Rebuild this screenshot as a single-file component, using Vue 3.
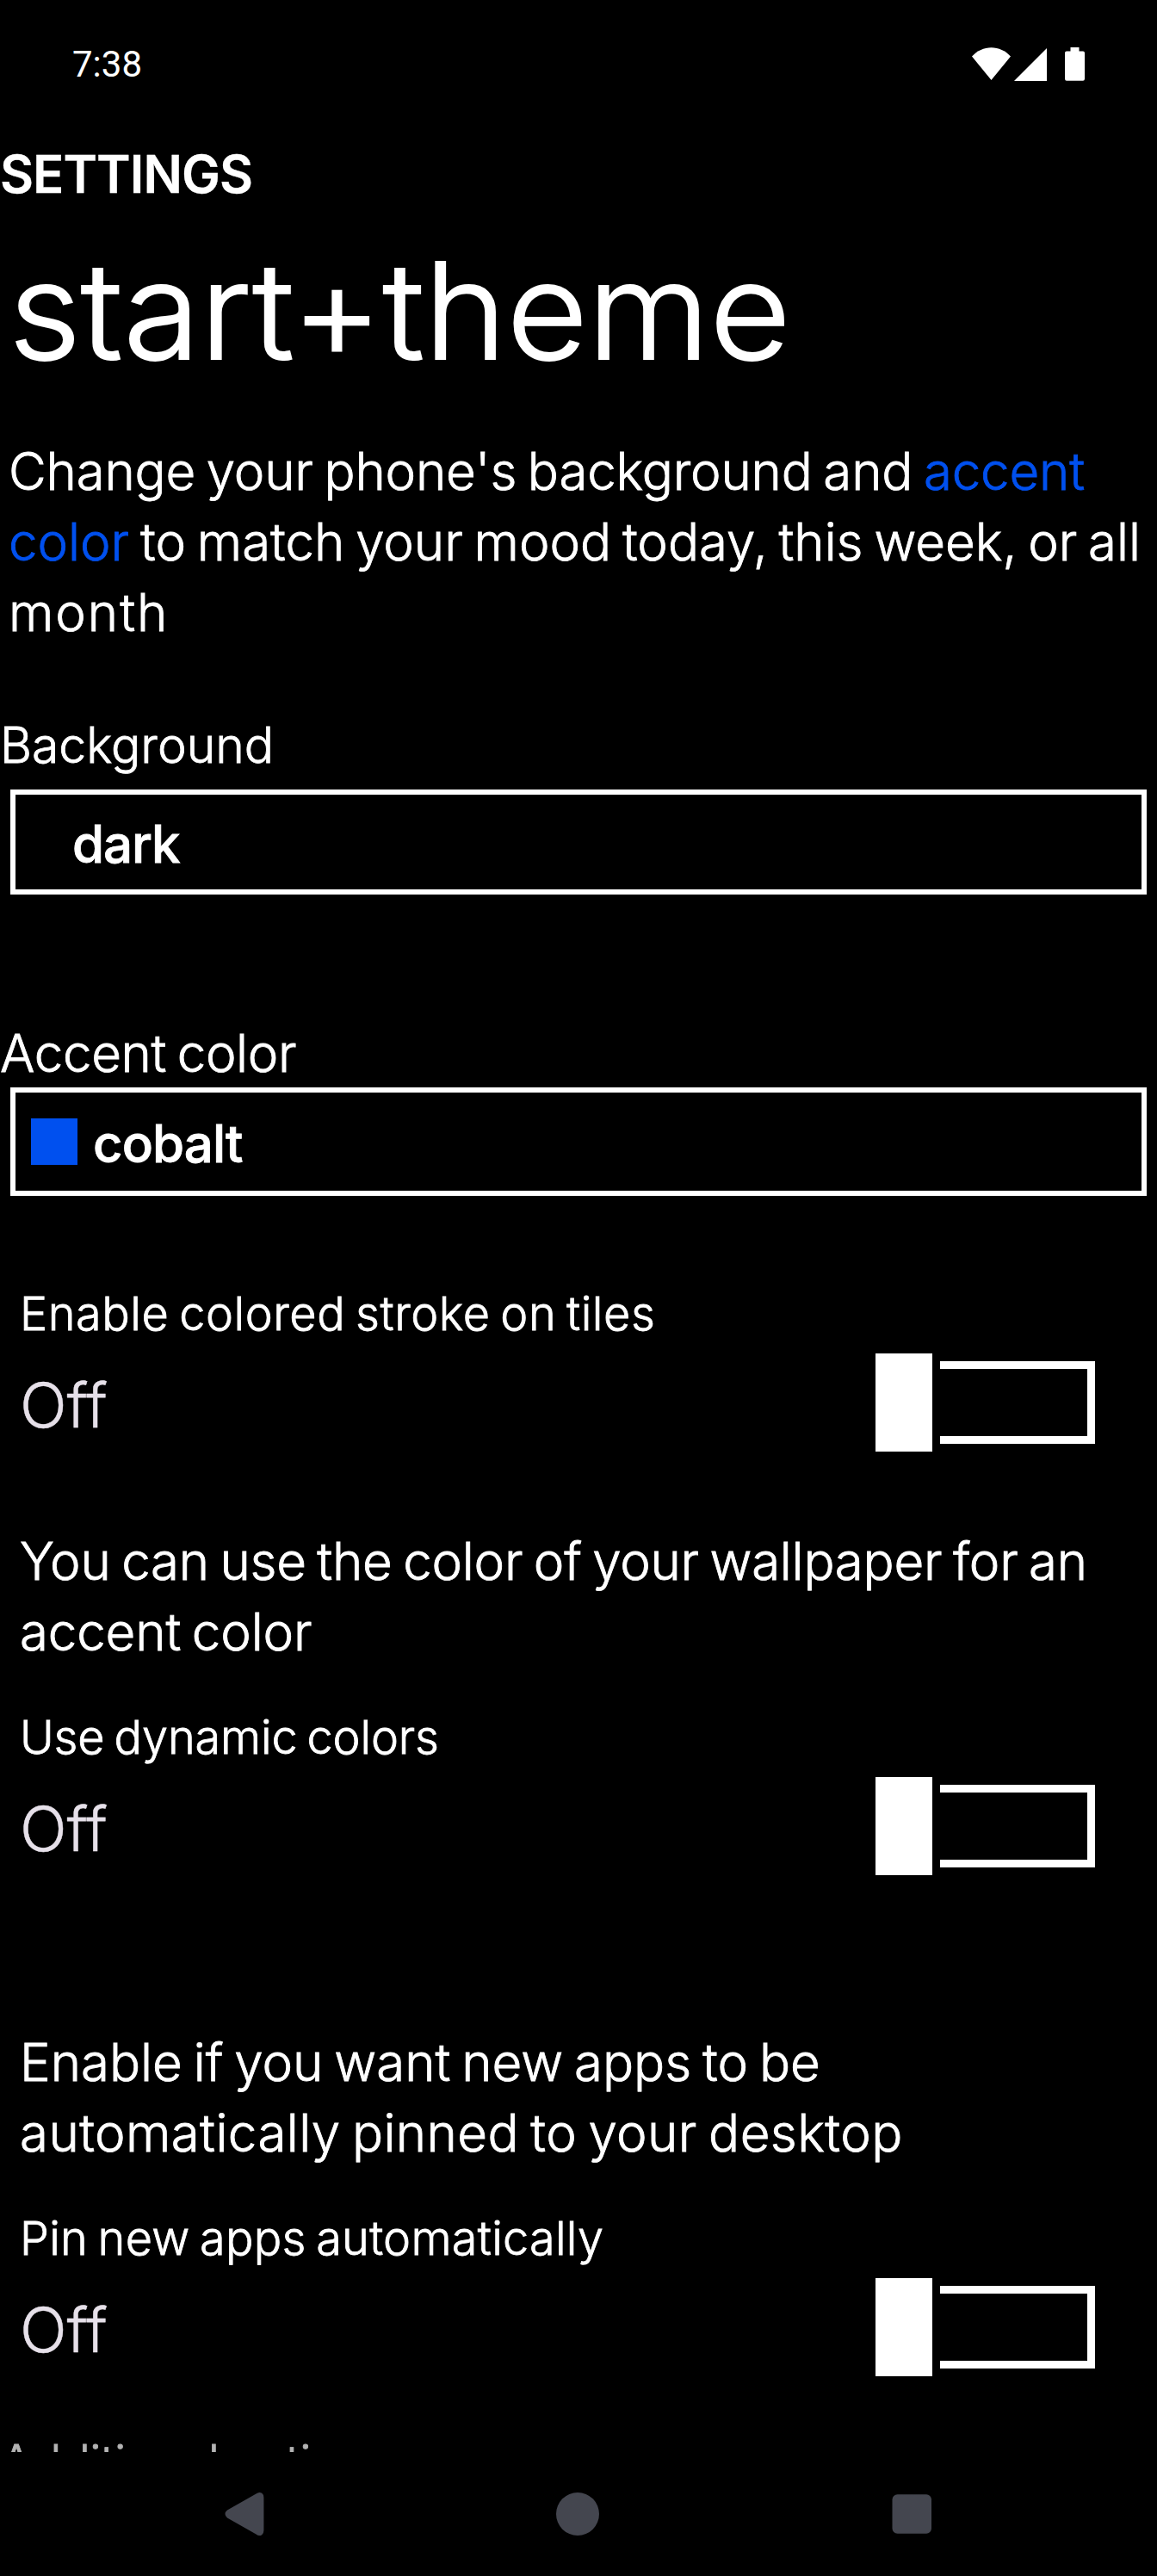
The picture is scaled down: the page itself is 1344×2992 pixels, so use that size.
<script setup>
import { ref } from 'vue'

const sections = ref([
  {
    id: 'stroke',
    note: [],
    label: 'Enable colored stroke on tiles',
    tracking: '0.57px',
    checked: false,
  },
  {
    id: 'dynamic',
    note: [
      { text: 'You can use the color of your wallpaper for an', tracking: '-0.25px' },
      { text: 'accent color', tracking: '-0.15px' },
    ],
    label: 'Use dynamic colors',
    tracking: '-0.15px',
    checked: false,
  },
  {
    id: 'pin',
    note: [
      { text: 'Enable if you want new apps to be', tracking: '0px' },
      { text: 'automatically pinned to your desktop', tracking: '0.42px' },
    ],
    label: 'Pin new apps automatically',
    tracking: '0.28px',
    checked: false,
  },
])
</script>

<template>
  <div class="screen">
    <header class="status">
      <span class="clock">7:38</span>
      <div class="status-icons">
        <svg class="wifi" viewBox="0 0 45 38"><path d="M0 10.500C6.200 4 14 .3 22.500 .3S38.800 4 45 10.500L22.500 38Z" /></svg>
        <svg class="signal" viewBox="0 0 38 38"><path d="M38 0V38H0Z" /></svg>
        <svg class="battery" viewBox="0 0 23 39"><path d="M6.500 0H16.500V4.500H21Q23 4.500 23 6.500V36.500Q23 38.700 21 38.700H2Q0 38.700 0 36.500V6.500Q0 4.500 2 4.500H6.500Z" /></svg>
      </div>
    </header>

    <main class="page">
      <div class="app-title">SETTINGS</div>
      <h1 class="title">start+theme</h1>

      <p class="intro">
        <span class="line first">Change your phone's background and <em>accent</em></span>
        <span class="line second"><em>color</em> to match your mood today, this week, or all</span>
        <span class="line third">month</span>
      </p>

      <div class="field-label background-label">Background</div>
      <div class="select background-select"><span class="value dark">dark</span></div>

      <div class="field-label accent-label">Accent color</div>
      <div class="select accent-select">
        <i class="swatch"></i>
        <span class="value cobalt">cobalt</span>
      </div>

      <section v-for="s in sections" :key="s.id" :class="['setting', s.id]">
        <p v-if="s.note.length" class="note">
          <span v-for="l in s.note" :key="l.text" class="line" :style="{ letterSpacing: l.tracking }">{{ l.text }}</span>
        </p>
        <div class="setting-label" :style="{ letterSpacing: s.tracking }">{{ s.label }}</div>
        <div class="setting-row">
          <span class="state">{{ s.checked ? 'On' : 'Off' }}</span>
          <button class="toggle" type="button" @click="s.checked = !s.checked">
            <span class="thumb"></span>
            <span class="track"></span>
          </button>
        </div>
      </section>

      <div class="more">Additional options</div>
    </main>

    <nav class="navbar">
      <svg viewBox="0 0 1344 144">
        <path d="M297.500 48.500Q301 45.800 304.200 47.800Q306.400 49.300 306.400 53V91Q306.400 94.700 304.200 96.200Q301 98.200 297.500 95.500L264 76.500Q261.500 74.500 261.500 72Q261.500 69.500 264 67.500Z" />
        <circle cx="671" cy="72" r="25" />
        <rect x="1036.500" y="49.300" width="45.500" height="45.500" rx="6" />
      </svg>
    </nav>
  </div>
</template>

<style>
html,
body {
  margin: 0;
  background: #000;
}
</style>

<style scoped>
.screen {
  width: 1344px;
  height: 2992px;
  overflow: hidden;
  background: #000;
  color: #fff;
  font-family: Inter, "Liberation Sans", sans-serif;
  font-weight: 300;
  word-spacing: -4px;
  -webkit-text-stroke-width: 0.8px;
  display: flex;
  flex-direction: column;
}

.status {
  height: 161px;
  flex: none;
  display: flex;
  justify-content: space-between;
  align-items: flex-start;
  padding: 0 84px;
  box-sizing: border-box;
}
.clock {
  font: 400 42px/50px Roboto, sans-serif;
  -webkit-text-stroke-width: 0;
  margin-top: 50px;
}
.status-icons {
  display: flex;
  align-items: flex-start;
  fill: #fff;
  padding-top: 55px;
}
.wifi { width: 45px; height: 38px; }
.signal { width: 38px; height: 38px; margin: 1px 21px 0 4px; }
.battery { width: 23px; height: 39px; }

.page {
  height: 2687px;
  flex: none;
  overflow: hidden;
}
.app-title {
  font-size: 60px;
  line-height: 82px;
  font-weight: 600;
  letter-spacing: -0.95px;
  -webkit-text-stroke-width: 0.3px;
}
.title {
  width: 860px;
  margin: 18px 0 0 10px;
  font-size: 155px;
  line-height: 200px;
  font-weight: 300;
  letter-spacing: -0.2px;
  white-space: nowrap;
  -webkit-text-stroke-width: 1.8px;
  transform: scaleX(1.05);
  transform-origin: left center;
}

p { margin: 0; }
.line {
  display: block;
  white-space: pre;
}
.intro {
  margin-top: 45px;
  padding-left: 10px;
  font-size: 60px;
  line-height: 82px;
}
.intro em {
  font-style: normal;
  color: #0050ef;
}
.first { letter-spacing: -0.18px; }
.second { letter-spacing: -0.02px; }
.third { letter-spacing: 1.97px; }

.field-label { white-space: nowrap; }
.background-label {
  margin: 75px 0 12px;
  font-size: 57px;
  line-height: 78px;
}
.accent-label {
  margin-top: 144px;
  font-size: 60px;
  line-height: 80px;
  letter-spacing: -0.34px;
}
.select {
  display: flex;
  align-items: center;
  box-sizing: border-box;
  margin: 0 12px;
  border: 6px solid #fff;
}
.background-select { height: 122px; }
.accent-select { height: 126px; }
.value {
  padding-top: 4px;
  font-size: 60px;
  line-height: 80px;
  font-weight: 500;
}
.dark {
  margin-left: 66px;
  letter-spacing: -1.1px;
}
.swatch {
  width: 54px;
  height: 54px;
  margin-left: 18px;
  background: #0050ef;
}
.cobalt {
  margin-left: 18px;
  letter-spacing: -0.92px;
}

.setting { padding-left: 23px; }
.stroke { margin-top: 100px; }
.dynamic { margin-top: 86px; }
.pin { margin-top: 176px; }
.note {
  margin-bottom: 45px;
  font-size: 60px;
  line-height: 82px;
}
.setting-label {
  font-size: 54px;
  line-height: 74px;
  white-space: nowrap;
}
.setting-row {
  display: flex;
  justify-content: space-between;
  align-items: center;
  height: 114px;
  margin: 9px 72px 0 0;
}
.state {
  padding-top: 6px;
  font-size: 72px;
  line-height: 90px;
  letter-spacing: -0.17px;
  -webkit-text-stroke-width: 0.4px;
  color: #e6e0e9;
}
.toggle {
  display: flex;
  align-items: center;
  gap: 9px;
  padding: 0;
  border: 0;
  background: none;
}
.thumb {
  width: 66px;
  height: 114px;
  background: #fff;
}
.track {
  box-sizing: border-box;
  width: 180px;
  height: 96px;
  border: 9px solid #fff;
  border-left: 0;
}

.more {
  margin-top: 62px;
  font-size: 57px;
  line-height: 78px;
  letter-spacing: -0.8px;
  color: #b3b3b3;
}

.navbar {
  height: 144px;
  flex: none;
}
.navbar svg {
  display: block;
  width: 1344px;
  height: 144px;
  fill: #44464f;
}
</style>
